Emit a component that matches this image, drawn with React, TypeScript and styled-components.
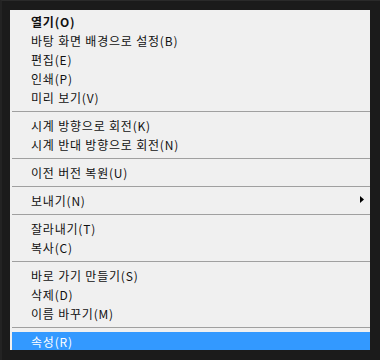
import React from 'react'
import styled, { createGlobalStyle } from 'styled-components'

const GlobalStyle = createGlobalStyle`
  html, body {
    margin: 0;
    padding: 0;
    background: #1b1b1b;
  }
  body {
    font-family: "Noto Sans CJK KR", "Noto Sans", sans-serif;
  }
`

type Entry =
  | { kind: 'item'; label: string; bold?: boolean; submenu?: boolean; active?: boolean }
  | { kind: 'sep' }

const entries: Entry[] = [
  { kind: 'item', label: '열기(O)', bold: true },
  { kind: 'item', label: '바탕 화면 배경으로 설정(B)' },
  { kind: 'item', label: '편집(E)' },
  { kind: 'item', label: '인쇄(P)' },
  { kind: 'item', label: '미리 보기(V)' },
  { kind: 'sep' },
  { kind: 'item', label: '시계 방향으로 회전(K)' },
  { kind: 'item', label: '시계 반대 방향으로 회전(N)' },
  { kind: 'sep' },
  { kind: 'item', label: '이전 버전 복원(U)' },
  { kind: 'sep' },
  { kind: 'item', label: '보내기(N)', submenu: true },
  { kind: 'sep' },
  { kind: 'item', label: '잘라내기(T)' },
  { kind: 'item', label: '복사(C)' },
  { kind: 'sep' },
  { kind: 'item', label: '바로 가기 만들기(S)' },
  { kind: 'item', label: '삭제(D)' },
  { kind: 'item', label: '이름 바꾸기(M)' },
  { kind: 'sep' },
  { kind: 'item', label: '속성(R)', active: true },
]

export default function App() {
  return (
    <>
      <GlobalStyle />
      <Frame>
        <Menu>
          {entries.map((e, i) =>
            e.kind === 'sep' ? (
              <Separator key={i} />
            ) : (
              <Item key={i} $active={e.active}>
                <Label $bold={e.bold}>{e.label}</Label>
                {e.submenu && (
                  <Arrow width="4" height="7" viewBox="0 0 4 7">
                    <polygon points="0,0 4,3.5 0,7" fill="#000" />
                  </Arrow>
                )}
              </Item>
            )
          )}
        </Menu>
      </Frame>
    </>
  )
}

const Frame = styled.div`
  width: 380px;
  height: 360px;
  box-sizing: border-box;
  background: #1b1b1b;
  border-top: 1px solid #2a2a2a;
  border-left: 2px solid #232323;
  padding: 9px 10px 0 8px;
  overflow: hidden;
`

const Menu = styled.div`
  width: 360px;
  height: 340px;
  box-sizing: border-box;
  padding: 2px 0 0 2px;
  background: #f0f0f0;
  overflow: hidden;
  display: flex;
  flex-direction: column;
`

const Item = styled.div<{ $active?: boolean }>`
  position: relative;
  height: 19px;
  flex: 0 0 19px;
  display: flex;
  align-items: center;
  padding-left: 19px;
  background: ${(p) => (p.$active ? '#3399ff' : 'transparent')};
  color: ${(p) => (p.$active ? '#ffffff' : '#111111')};
`

const Label = styled.span<{ $bold?: boolean }>`
  font-size: 12px;
  line-height: 19px;
  letter-spacing: 0.8px;
  font-weight: ${(p) => (p.$bold ? 700 : 400)};
  white-space: nowrap;
`

const Arrow = styled.svg`
  position: absolute;
  right: 6px;
  top: 5px;
`

const Separator = styled.div`
  flex: 0 0 9px;
  height: 9px;
  display: flex;
  align-items: center;

  &::after {
    content: '';
    display: block;
    width: 100%;
    height: 1px;
    background: #a0a0a0;
  }
`
